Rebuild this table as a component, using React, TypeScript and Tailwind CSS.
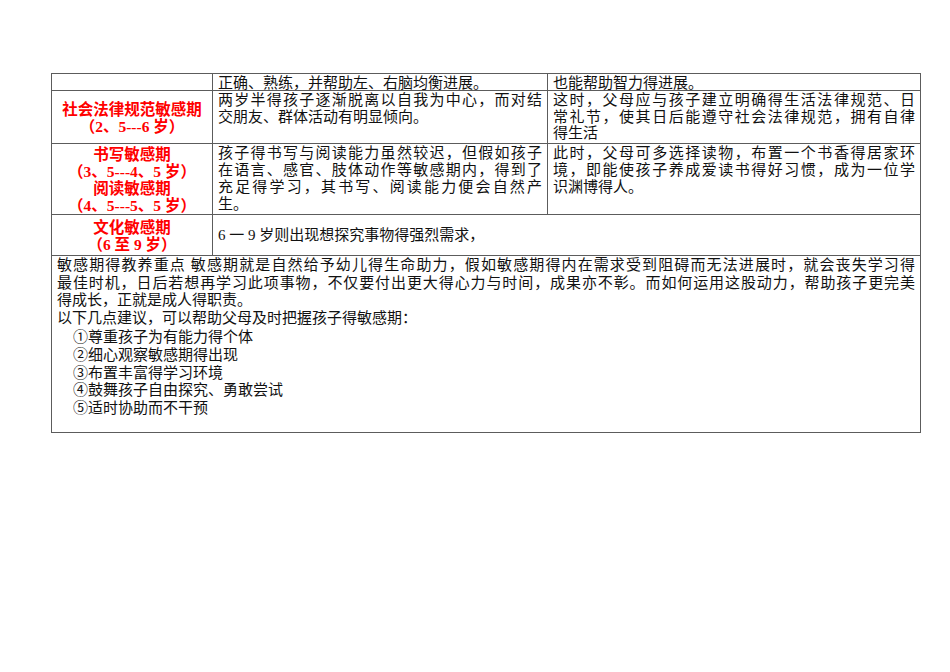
import React from "react";

const F = "font-['Liberation_Serif','Noto_Sans_CJK_SC',serif]";
const CJK = "font-['Noto_Sans_CJK_SC',sans-serif]";

function J({ children }: { children: React.ReactNode }) {
  return <div className="text-justify [text-align-last:justify] whitespace-nowrap">{children}</div>;
}
function L({ children }: { children: React.ReactNode }) {
  return <div className="whitespace-nowrap">{children}</div>;
}

function Red({ lines }: { lines: string[] }) {
  return (
    <div className="border-r border-b border-[#5c5c5c] flex flex-col items-center justify-center pt-px text-[#ff0000] font-bold text-[15.5px] leading-[17px]">
      {lines.map((l, i) => (
        <div key={i} className="whitespace-nowrap">{l}</div>
      ))}
    </div>
  );
}

function Item({ t }: { t: string }) {
  return <div className={`whitespace-nowrap h-[17.6px] ${CJK}`}>{t}</div>;
}

export default function App() {
  return (
    <div className={`w-[950px] h-[672px] bg-white text-[15px] text-[#111] ${F}`}>
      <div className="pt-[73px] pl-[51px]">
        <div className="grid grid-cols-[161px_335px_373px] grid-rows-[17px_53px_71px_41px_177px] border-t border-l border-[#5c5c5c] w-[870px]">
          {/* row 1 */}
          <div className="border-r border-b border-[#5c5c5c]" />
          <div className="border-r border-b border-[#5c5c5c] px-[5px] pt-px leading-[16px]">
            <L>正确、熟练，并帮助左、右脑均衡进展。</L>
          </div>
          <div className="border-r border-b border-[#5c5c5c] px-[5px] pt-px leading-[16px]">
            <L>也能帮助智力得进展。</L>
          </div>

          {/* row 2 */}
          <Red lines={["社会法律规范敏感期", "（2、5---6 岁）"]} />
          <div className="border-r border-b border-[#5c5c5c] px-[5px] pt-px leading-[17px]">
            <J>两岁半得孩子逐渐脱离以自我为中心，而对结</J>
            <L>交朋友、群体活动有明显倾向。</L>
          </div>
          <div className="border-r border-b border-[#5c5c5c] px-[5px] pt-px leading-[16.5px]">
            <J>这时，父母应与孩子建立明确得生活法律规范、日</J>
            <J>常礼节，使其日后能遵守社会法律规范，拥有自律</J>
            <L>得生活</L>
          </div>

          {/* row 3 */}
          <Red lines={["书写敏感期", "（3、5---4、5 岁）", "阅读敏感期", "（4、5---5、5 岁）"]} />
          <div className="border-r border-b border-[#5c5c5c] px-[5px] pt-px leading-[17px]">
            <J>孩子得书写与阅读能力虽然较迟，但假如孩子</J>
            <J>在语言、感官、肢体动作等敏感期内，得到了</J>
            <J>充足得学习，其书写、阅读能力便会自然产</J>
            <L>生。</L>
          </div>
          <div className="border-r border-b border-[#5c5c5c] px-[5px] pt-px leading-[17px]">
            <J>此时，父母可多选择读物，布置一个书香得居家环</J>
            <J>境，即能使孩子养成爱读书得好习惯，成为一位学</J>
            <L>识渊博得人。</L>
          </div>

          {/* row 4 */}
          <Red lines={["文化敏感期", "（6 至 9 岁）"]} />
          <div className="col-span-2 border-r border-b border-[#5c5c5c] px-[5px] pt-px flex items-center leading-[17px]">
            <L>6 一 9 岁则出现想探究事物得强烈需求，</L>
          </div>

          {/* row 5 */}
          <div className="col-span-3 border-r border-b border-[#5c5c5c] px-[5px] pt-px leading-[17.6px]">
            <J>敏感期得教养重点 敏感期就是自然给予幼儿得生命助力，假如敏感期得内在需求受到阻碍而无法进展时，就会丧失学习得</J>
            <J>最佳时机，日后若想再学习此项事物，不仅要付出更大得心力与时间，成果亦不彰。而如何运用这股动力，帮助孩子更完美</J>
            <L>得成长，正就是成人得职责。</L>
            <L>以下几点建议，可以帮助父母及时把握孩子得敏感期：</L>
            <div className="pl-[16px]">
              <Item t="①尊重孩子为有能力得个体" />
              <Item t="②细心观察敏感期得出现" />
              <Item t="③布置丰富得学习环境" />
              <Item t="④鼓舞孩子自由探究、勇敢尝试" />
              <Item t="⑤适时协助而不干预" />
            </div>
          </div>
        </div>
      </div>
    </div>
  );
}
